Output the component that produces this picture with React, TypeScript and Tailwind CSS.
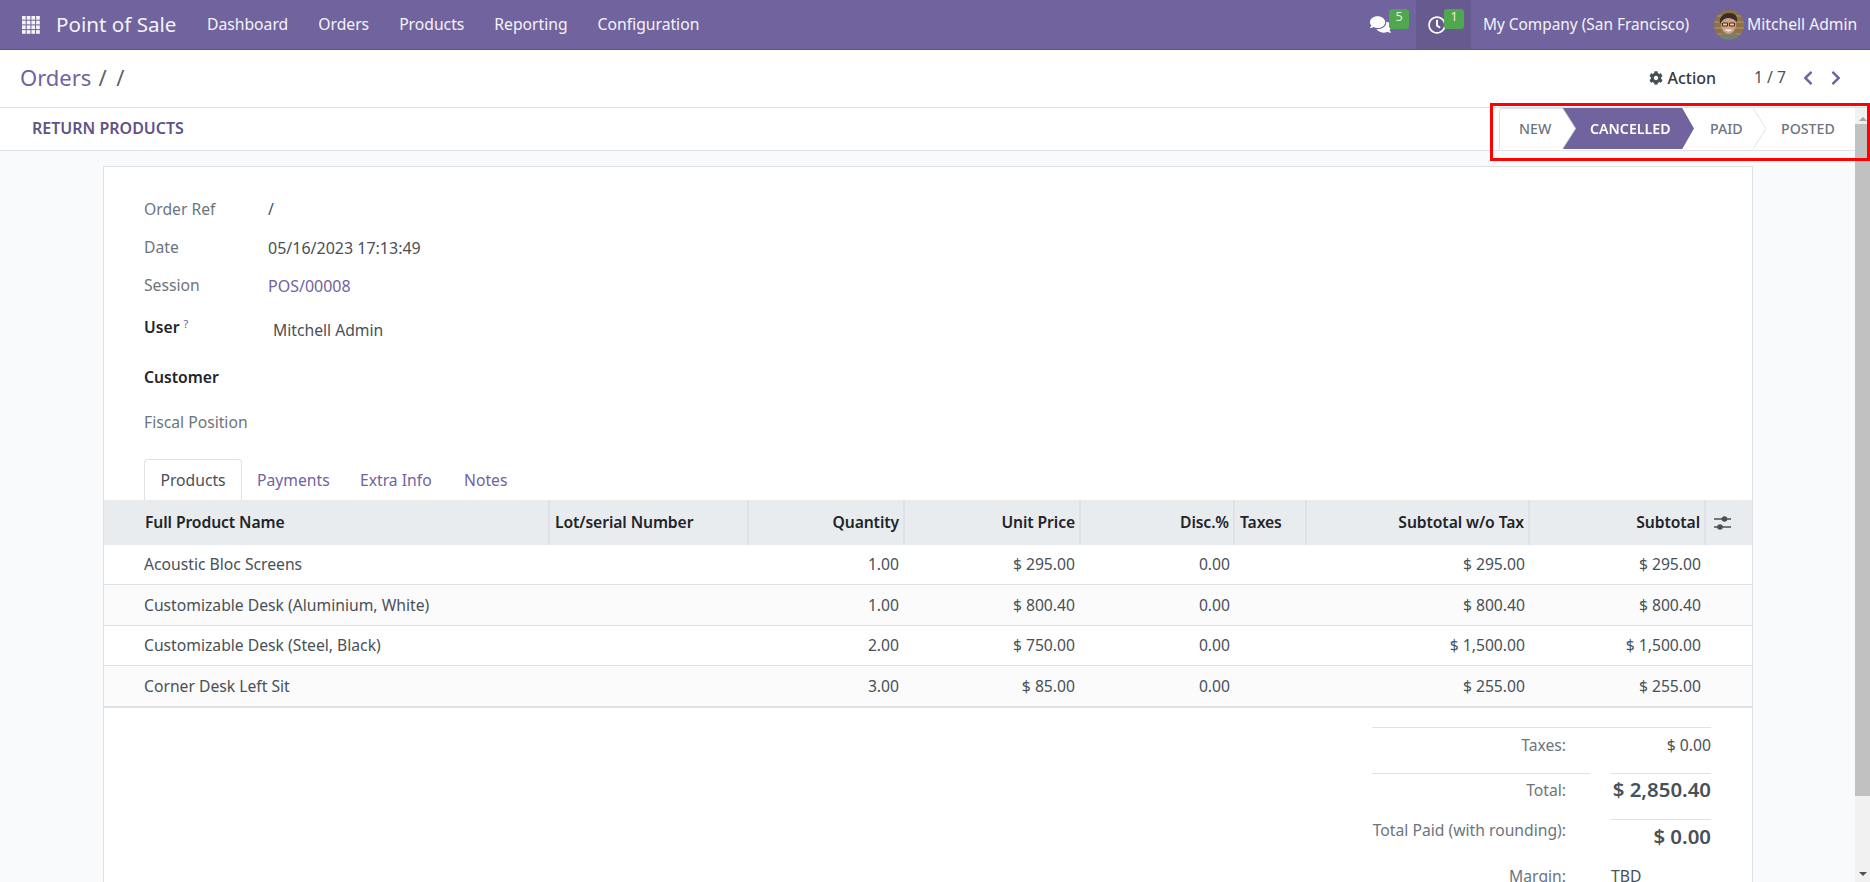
import React from "react";
import { FaComments, FaRegClock, FaCog, FaChevronLeft, FaChevronRight } from "react-icons/fa";

const rows = [
  ["Acoustic Bloc Screens", "1.00", "$ 295.00", "0.00", "$ 295.00", "$ 295.00"],
  ["Customizable Desk (Aluminium, White)", "1.00", "$ 800.40", "0.00", "$ 800.40", "$ 800.40"],
  ["Customizable Desk (Steel, Black)", "2.00", "$ 750.00", "0.00", "$ 1,500.00", "$ 1,500.00"],
  ["Corner Desk Left Sit", "3.00", "$ 85.00", "0.00", "$ 255.00", "$ 255.00"],
];

const rowClass = [
  "h-[39px] border-b border-[#dee2e6]",
  "h-[41px] border-b border-[#dee2e6] bg-[#fbfbfb]",
  "h-[40px] border-b border-[#dee2e6]",
  "h-[42px] border-b-2 border-[#dee2e6] bg-[#fbfbfb]",
];

function AppsIcon() {
  const cells = [];
  for (let r = 0; r < 4; r++) for (let c = 0; c < 4; c++) cells.push(<rect key={r + "-" + c} x={c * 4.7} y={r * 4.7} width="3.7" height="3.7" fill="#f4f3f8" />);
  return <svg width="18" height="18" viewBox="0 0 18 18">{cells}</svg>;
}

function Avatar() {
  return (
    <svg width="30" height="30" viewBox="0 0 30 30" className="rounded-full">
      <g className="blur-[0.4px]">
        <rect width="30" height="30" fill="#8d7248" />
        <path d="M0 6h30M0 12h30M0 18h30M0 24h30" stroke="#a88c5c" strokeWidth="1.5" />
        <path d="M4 30c1-6 5-7 11-7s10 1 11 7z" fill="#75806f" />
        <ellipse cx="14.5" cy="15" rx="7.5" ry="9" fill="#d4a084" />
        <path d="M6 14C5 7 9 3 15 3s9 3 8 9c-3-3-6-4-9-4s-6 2-8 6z" fill="#3a2d27" />
        <path d="M8.5 13h5v3h-5zM15.5 13h5v3h-5z" fill="#e6c6ae" stroke="#2c2320" strokeWidth=".9" />
        <path d="M10.5 19.5c2 2.5 6 2.5 8 0z" fill="#f5efe8" />
      </g>
    </svg>
  );
}

function Field({ label, strong, sup, value, valueClass, h }: { label: string; strong?: boolean; sup?: boolean; value?: string; valueClass?: string; h: string }) {
  return (
    <div className={"flex items-center " + h}>
      <div className={"w-[124px] " + (strong ? "font-semibold text-[#212529]" : "text-[#6c757d]")}>
        {label}
        {sup && <sup className="ml-1 text-[11px] font-normal text-[#71639e]">?</sup>}
      </div>
      {value && <div className={valueClass}>{value}</div>}
    </div>
  );
}

export default function App() {
  return (
    <div className="relative flex h-[882px] w-[1870px] flex-col overflow-hidden bg-white text-[15.7px] text-[#495057]" style={{ fontFamily: '"Noto Sans", sans-serif' }}>
      <header className="flex h-[50px] shrink-0 items-center border-b border-[#5f5387] bg-[#71639e] text-[#f4f3f8]">
        <div className="ml-[22px] flex w-[34px] items-center"><AppsIcon /></div>
        <div className="w-[151px] text-[20.6px]">Point of Sale</div>
        <nav className="flex gap-[30px]">
          <span>Dashboard</span>
          <span>Orders</span>
          <span>Products</span>
          <span>Reporting</span>
          <span>Configuration</span>
        </nav>
        <div className="ml-auto flex h-full items-center">
          <div className="relative flex h-full w-[56px] items-center pl-[10px]">
            <FaComments className="text-[21px] text-white" />
            <span className="absolute left-[29px] top-[9px] flex h-5 w-5 items-center justify-center rounded-[3px] bg-[#4fa84f] pb-[3px] text-[12.5px] text-[#e8f0d8]">5</span>
          </div>
          <div className="relative flex h-full w-[55px] items-center bg-[#665a8f] pl-[12px]">
            <FaRegClock className="text-[18px] text-white" />
            <span className="absolute left-[28px] top-[9px] flex h-5 w-5 items-center justify-center rounded-[3px] bg-[#4fa84f] pb-[3px] text-[12.5px] text-[#e8f0d8]">1</span>
          </div>
          <span className="ml-[12px] w-[231px] whitespace-nowrap text-[15.4px]">My Company (San Francisco)</span>
          <Avatar />
          <span className="ml-[3px] w-[123px] whitespace-nowrap">Mitchell Admin</span>
        </div>
      </header>

      <div className="flex h-[58px] shrink-0 items-center border-b border-[#dee2e6] pb-[2px] pl-[20px]">
        <div className="text-[22px] text-[#71639e]">Orders<span className="ml-[7px] text-[#5d6169] [word-spacing:4px]">/ /</span></div>
        <div className="ml-auto flex items-center">
          <FaCog className="text-[14px] text-[#4a4f55]" />
          <span className="ml-[4px] text-[16px] font-medium text-[#343a40]">Action</span>
          <span className="ml-[38px] text-[#495057]">1 / 7</span>
          <FaChevronLeft className="ml-[14px] text-[16px] text-[#71639e]" />
          <FaChevronRight className="ml-[12px] mr-[26px] text-[16px] text-[#71639e]" />
        </div>
      </div>

      <div className="flex min-h-0 flex-1">
        <main className="min-w-0 flex-1 bg-[#f9fafb]">
          <div className="flex h-[43px] items-center border-b border-[#dee2e6] bg-white">
            <button className="mb-[2px] ml-[32px] text-[16px] font-semibold uppercase text-[#5f5387]">Return Products</button>
            <div className="ml-auto flex h-[41px] items-center self-start text-[14.2px] font-medium uppercase text-[#6c757d]">
              <div className="flex h-full w-[64px] items-center rounded-tl border-l border-t border-[#dee2e6] pl-[19px]">New</div>
              <div className="h-full w-[131px] [filter:drop-shadow(-1px_0_0_#ced4da)]">
                <div className="flex h-full items-center bg-[#71639e] pl-[27px] font-semibold text-white [clip-path:polygon(0_0,91%_0,100%_50%,91%_100%,0_100%,10%_50%)]">Cancelled</div>
              </div>
              <div className="flex h-full w-[59px] items-center pl-[16px]">Paid</div>
              <svg width="14" height="41" viewBox="0 0 14 41" className="shrink-0"><path d="M0 0l13 20.5L0 41" fill="none" stroke="#dee2e6" /></svg>
              <div className="flex h-full w-[88px] items-center pl-[14px]">Posted</div>
            </div>
          </div>

          <section className="ml-[103px] mr-[102px] mt-[15px] h-[800px] border border-[#dee2e6] bg-white">
            <div className="pl-[40px] pt-[24px]">
              <Field h="h-[38px]" label="Order Ref" value="/" />
              <Field h="h-[38px]" label="Date" value="05/16/2023 17:13:49" valueClass="text-[16px]" />
              <Field h="h-[38px]" label="Session" value="POS/00008" valueClass="text-[16px] text-[#71639e]" />
              <Field h="h-[46px]" label="User" strong sup value="Mitchell Admin" valueClass="ml-[5px] mt-[5px]" />
              <Field h="h-[54px]" label="Customer" strong />
              <Field h="h-[36px]" label="Fiscal Position" />
            </div>
            <div className="mt-[18px] flex h-[41px] items-stretch pl-[40px] text-[#71639e]">
              <div className="z-10 flex w-[98px] items-center justify-center rounded-t border border-b-0 border-[#dee2e6] bg-white pt-[1px] text-[#495057]">Products</div>
              <div className="ml-[15px] flex w-[103px] items-center pt-[2px]">Payments</div>
              <div className="flex w-[104px] items-center pt-[2px]">Extra Info</div>
              <div className="flex items-center pt-[2px]">Notes</div>
            </div>
            <table className="w-full table-fixed border-collapse">
              <colgroup>
                <col className="w-[445px]" />
                <col className="w-[199px]" />
                <col className="w-[156px]" />
                <col className="w-[176px]" />
                <col className="w-[154px]" />
                <col className="w-[72px]" />
                <col className="w-[223px]" />
                <col className="w-[176px]" />
                <col />
              </colgroup>
              <thead>
                <tr className="h-[45px] bg-[#e9ecef] tracking-[-0.1px] text-[#212529]">
                  <th className="pl-[41px] text-left font-semibold">Full Product Name</th>
                  <th className="border-l-2 border-[#dee2e6] pl-[5px] text-left font-semibold">Lot/serial Number</th>
                  <th className="border-l-2 border-[#dee2e6] pr-[4px] text-right font-semibold">Quantity</th>
                  <th className="border-l-2 border-[#dee2e6] pr-[4px] text-right font-semibold">Unit Price</th>
                  <th className="border-l-2 border-[#dee2e6] pr-[4px] text-right font-semibold">Disc.%</th>
                  <th className="border-l-2 border-[#dee2e6] pl-[5px] text-left font-semibold">Taxes</th>
                  <th className="border-l-2 border-[#dee2e6] pr-[4px] text-right font-semibold">Subtotal w/o Tax</th>
                  <th className="border-l-2 border-[#dee2e6] pr-[4px] text-right font-semibold">Subtotal</th>
                  <th className="border-l-2 border-[#dee2e6] pl-[8px]">
                    <svg width="17" height="14" viewBox="0 0 17 14"><path d="M0 3h17M0 11h17" stroke="#495057" strokeWidth="1.3" /><circle cx="10.5" cy="3" r="2.8" fill="#495057" /><circle cx="6" cy="11" r="2.8" fill="#495057" /></svg>
                  </th>
                </tr>
              </thead>
              <tbody>
                {rows.map((r, i) => (
                  <tr key={i} className={rowClass[i]}>
                    <td className="pl-[40px] pt-[2px]">{r[0]}</td>
                    <td />
                    <td className="pr-[5px] pt-[2px] text-right">{r[1]}</td>
                    <td className="pr-[5px] pt-[2px] text-right">{r[2]}</td>
                    <td className="pr-[4px] pt-[2px] text-right">{r[3]}</td>
                    <td />
                    <td className="pr-[4px] pt-[2px] text-right">{r[4]}</td>
                    <td className="pr-[4px] pt-[2px] text-right">{r[5]}</td>
                    <td />
                  </tr>
                ))}
              </tbody>
            </table>
            <div className="ml-auto mr-[41px] mt-[19px] w-[339px] border-t border-[#dee2e6]">
              <div className="flex h-[45px] items-center pb-[9px]">
                <div className="w-[194px] text-right text-[#6c757d]">Taxes:</div>
                <div className="flex-1 text-right">$ 0.00</div>
              </div>
              <div className="flex">
                <div className="flex h-[46px] w-[218px] items-center justify-end border-t border-[#dee2e6] pb-[11px] pr-[24px] text-[#6c757d]">Total:</div>
                <div className="ml-[21px] flex h-[46px] flex-1 items-center justify-end whitespace-nowrap border-t border-[#dee2e6] pb-[15px] text-[20.4px] font-semibold">$ 2,850.40</div>
              </div>
              <div className="flex">
                <div className="h-[46px] w-[218px] whitespace-nowrap pr-[24px] text-right text-[#6c757d]">Total Paid (with rounding):</div>
                <div className="ml-[21px] flex h-[46px] flex-1 items-center justify-end whitespace-nowrap border-t border-[#dee2e6] pb-[13px] text-[20.4px] font-semibold">$ 0.00</div>
              </div>
              <div className="flex items-center">
                <div className="w-[194px] text-right text-[#6c757d]">Margin:</div>
                <div className="ml-[45px]">TBD</div>
              </div>
            </div>
          </section>
        </main>
        <aside className="flex w-[15px] shrink-0 flex-col items-center bg-[#f1f1f1]">
          <div className="mt-[9px] h-0 w-0 border-x-[4px] border-b-[4px] border-x-transparent border-b-[#a3a3a3]" />
          <div className="mt-[3px] h-[672px] w-full bg-[#c1c1c1]" />
          <div className="mb-[6px] mt-auto h-0 w-0 border-x-[4px] border-t-[4px] border-x-transparent border-t-[#505050]" />
        </aside>
      </div>
      <div className="pointer-events-none absolute left-[1490px] top-[103px] h-[58px] w-[380px] border-[3px] border-[#fe0000]" />
    </div>
  );
}
